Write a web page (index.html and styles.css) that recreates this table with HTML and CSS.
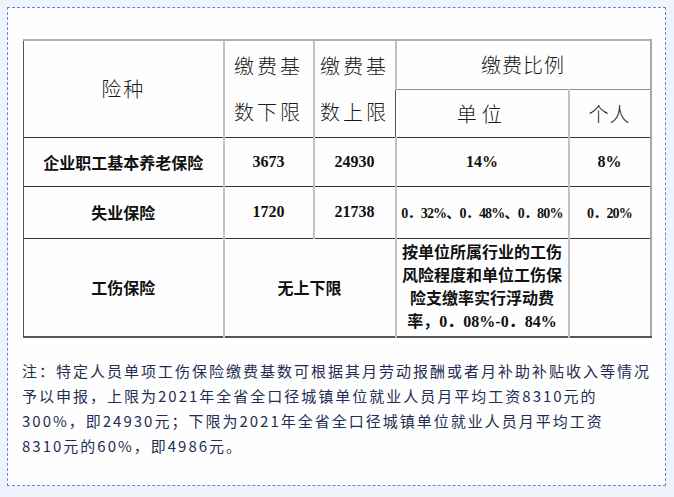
FILE: index.html
```html
<!DOCTYPE html>
<html lang="zh-CN">
<head>
<meta charset="utf-8">
<title>缴费基数与比例</title>
<link rel="stylesheet" href="styles.css">
</head>
<body>
<div class="frame">
  <table class="rates">
    <colgroup>
      <col class="c-name"><col class="c-low"><col class="c-high"><col class="c-unit"><col class="c-person">
    </colgroup>
    <tr class="h1">
      <th rowspan="2" class="hd sp2">险种</th>
      <th rowspan="2" class="hd tall sp3">缴费基<br>数下限</th>
      <th rowspan="2" class="hd tall sp3">缴费基<br>数上限</th>
      <th colspan="2" class="hd sp1">缴费比例</th>
    </tr>
    <tr class="h2">
      <th class="hd sp5 mid">单位</th>
      <th class="hd sp1 mid">个人</th>
    </tr>
    <tr class="r1">
      <td class="first">企业职工基本养老保险</td>
      <td>3673</td>
      <td>24930</td>
      <td>14%</td>
      <td>8%</td>
    </tr>
    <tr class="r2">
      <td>失业保险</td>
      <td>1720</td>
      <td>21738</td>
      <td class="tight">0．32%、0．48%、0．80%</td>
      <td class="tight">0．20%</td>
    </tr>
    <tr class="r3">
      <td>工伤保险</td>
      <td colspan="2">无上下限</td>
      <td class="multi">按单位所属行业的工伤风险程度和单位工伤保险支缴率实行浮动费率，0．08%-0．84%</td>
      <td></td>
    </tr>
  </table>
  <p class="note">注：特定人员单项工伤保险缴费基数可根据其月劳动报酬或者月补助补贴收入等情况<br>予以申报，上限为2021年全省全口径城镇单位就业人员月平均工资8310元的<br>300%，即24930元；下限为2021年全省全口径城镇单位就业人员月平均工资<br>8310元的60%，即4986元。</p>
</div>
</body>
</html>
```
FILE: styles.css
```css
html, body {
  margin: 0;
  padding: 0;
  background: #eef3fd;
}
body {
  padding: 7px 8px 12px 7px;
}
.frame {
  box-sizing: border-box;
  width: 659px;
  height: 479px;
  border: 1px dashed #5f87e6;
  background: #fefeff;
  padding: 31px 15px 0 15px;
}
.rates {
  border-collapse: collapse;
  table-layout: fixed;
  width: 627px;
  border-left: 1px solid #555;
  border-right: 2px solid #a8a8a8;
  border-bottom: 2px solid #555;
  font-family: "Liberation Serif", "Noto Sans CJK SC", serif;
  font-weight: bold;
  font-size: 16px;
  color: #111;
}
.c-name { width: 200px; }
.c-low { width: 90px; }
.c-high { width: 82px; }
.c-unit { width: 173px; }
.c-person { width: 82px; }

.rates th, .rates td {
  border: none;
  border-left: 2px solid #c2c2c2;
  border-top: 1px solid #333;
  padding: 0 4px;
  text-align: center;
  vertical-align: middle;
}
.rates .h1 th { border-top: 2px solid #b0b0b0; }
.rates .h2 th { border-top: 1px solid #8a8a8a; }
.rates th:first-child, .rates td:first-child { border-left: 1px solid #555; }

.h1 { height: 49px; }
.h2 { height: 48px; }
.r1 { height: 49px; }
.r2 { height: 52px; }
.r3 { height: 99px; }

.hd {
  font-family: "Noto Sans CJK SC", sans-serif;
  font-weight: 300;
  font-size: 20px;
  color: #1a1a1a;
}
.tall { line-height: 46px; padding-top: 2px; }
.sp1 { letter-spacing: 1px; }
.sp2 { letter-spacing: 2px; }
.sp3 { letter-spacing: 3px; }
.sp5 { letter-spacing: 5px; }
.mid { padding-top: 4px; }

.rates .tight {
  white-space: nowrap;
  font-size: 14px;
  letter-spacing: -0.8px;
  padding: 0 2px;
}

.multi {
  line-height: 23px;
  padding: 2px 4px 0 4px;
}

.note {
  margin: 20px 0 0 -1px;
  font-family: "Noto Sans CJK SC", sans-serif;
  font-size: 15px;
  line-height: 25px;
  letter-spacing: 2px;
  white-space: nowrap;
  color: #1f2e52;
}
```
